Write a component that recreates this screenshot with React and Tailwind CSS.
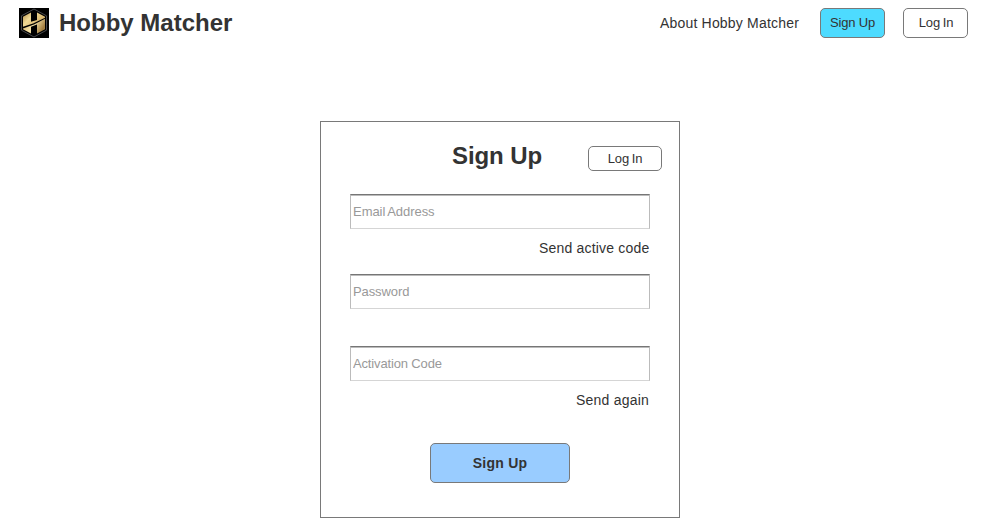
function Logo() {
  return (
    <svg width="30" height="30" viewBox="0 0 30 30" role="img" aria-label="Hobby Matcher">
      <defs>
        <linearGradient id="goldLeft" x1="0" y1="0" x2="1" y2="0.6">
          <stop offset="0" stopColor="#b08c4a" />
          <stop offset="0.4" stopColor="#f0d995" />
          <stop offset="1" stopColor="#d0aa60" />
        </linearGradient>
        <linearGradient id="goldRight" x1="0" y1="0" x2="1" y2="0.4">
          <stop offset="0" stopColor="#d0aa60" />
          <stop offset="0.55" stopColor="#f6e4aa" />
          <stop offset="1" stopColor="#a37e40" />
        </linearGradient>
      </defs>
      <rect width="30" height="30" fill="#000" />
      <path d="M15 1 27.5 7.8V22.2L15 29 2.5 22.2V7.8Z" fill="none" stroke="#5a5c60" strokeWidth="0.8" />
      <path d="M4 8.8 12 4.4V13.8L18 12V4.4L26 8.8V9.8L14 15.6 4 18.8Z" fill="url(#goldLeft)" />
      <path d="M4 20.6 15 16.4 26 10.8V21.2L18 25.6V16.6L12 18.8V25.6L4 21.2Z" fill="url(#goldRight)" />
    </svg>
  );
}

function Field({ label, type = "text", className }) {
  return (
    <input
      type={type}
      placeholder={label}
      aria-label={label}
      className={
        "block h-[35px] w-[300px] border border-t-[#767676] border-x-[#bbbbbb] border-b-[#d5d5d5] px-0.5 text-[13px] text-[#333333] shadow-[inset_0_1px_0_#bbbbbb] outline-none placeholder:text-[#999999] " +
        className
      }
    />
  );
}

export default function App() {
  return (
    <div className="h-[518px] overflow-hidden bg-white font-['Liberation_Sans',Arial,sans-serif] text-[#333333]">
      <header className="flex h-[46px] items-center pl-[19px] pr-8">
        <Logo />
        <h1 className="ml-2.5 text-2xl font-bold leading-7">Hobby Matcher</h1>
        <a className="ml-auto mr-[21px] text-[14px] tracking-[0.19px]">About Hobby Matcher</a>
        <button className="h-[30px] w-[65px] rounded-[5px] border border-[#797979] bg-[#4ddbff] text-[13px] tracking-[-0.15px]">
          Sign Up
        </button>
        <button className="ml-[18px] h-[30px] w-[65px] rounded-[5px] border border-[#797979] bg-white pl-px text-[13px] tracking-[-0.15px] [word-spacing:-0.8px]">
          Log In
        </button>
      </header>
      <main className="mx-auto mt-[75px] flex h-[397px] w-[360px] flex-col border border-[#797979] pl-[29px]">
        <div className="flex h-[72px] pt-5">
          <h2 className="ml-[102px] text-2xl font-bold leading-7 tracking-[-0.1px]">Sign Up</h2>
          <button className="ml-auto mr-[17px] mt-1 h-[25px] w-[74px] rounded-[5px] border border-[#797979] bg-white text-[13px] tracking-[-0.15px] [word-spacing:-0.8px]">
            Log In
          </button>
        </div>
        <Field label="Email Address" className="tracking-[-0.04px] [word-spacing:-1px]" />
        <a className="mt-[11px] w-[299.5px] text-right text-[14px] leading-4 tracking-[0.2px]">Send active code</a>
        <Field label="Password" type="password" className="mt-[18px] tracking-[-0.1px]" />
        <Field label="Activation Code" className="mt-[37px] tracking-[-0.15px]" />
        <a className="mt-[11px] w-[299px] text-right text-[14px] leading-4 tracking-[0.22px]">Send again</a>
        <button className="ml-20 mt-[35px] h-10 w-[140px] rounded-[5px] border border-[#797979] bg-[#99ccff] text-[14px] font-bold tracking-[0.25px]">
          Sign Up
        </button>
      </main>
    </div>
  );
}
